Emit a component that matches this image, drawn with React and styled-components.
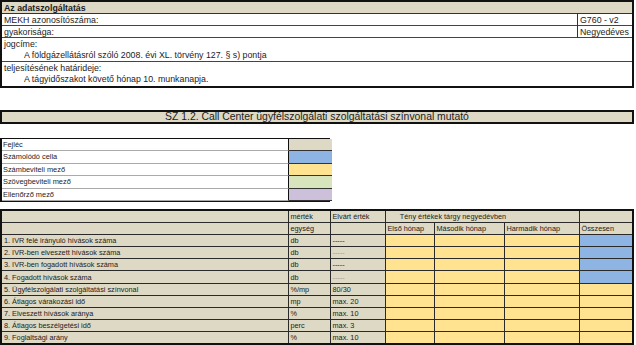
import React from "react";
import styled, { createGlobalStyle } from "styled-components";

const GlobalStyle = createGlobalStyle`
body {
  margin: 0;
  background: #ffffff;
  font-family: "Liberation Sans", Arial, sans-serif;
  color: #1c1c1c;
}
`

const beige = "#ddd9c4";
const blue = "#8db4e2";
const yellow = "#ffe391";
const green = "#d8e4bc";
const purple = "#ccc0da";

const Page = styled.div`
display: flex;
flex-direction: column;
width: 636px;
height: 345px;
overflow: hidden;
`

const InfoBox = styled.section`
width: 634px;
box-sizing: border-box;
border: 2px solid #111;
font-size: 8.8px;
`

const InfoHeader = styled.div`
height: 12px;
box-sizing: border-box;
background: ${beige};
font-weight: bold;
padding: 1px 2px 0;
border-bottom: 1px solid #333;
line-height: 11px;
`

const InfoRow = styled.div`
display: grid;
grid-template-columns: 1fr 55px;
height: ${p => p.$tall ? 24 : 12}px;
box-sizing: border-box;
border-bottom: ${p => p.$last ? "none" : "1px solid #444"};
line-height: 11px;
`

const InfoCell = styled.div`
padding: 1px 2px 0;
border-left: ${p => p.$side ? "1px solid #333" : "none"};
`

const Indent = styled.div`
padding-left: 20px;
`

const TitleBar = styled.div`
margin-top: 22px;
width: 634px;
height: 14px;
box-sizing: border-box;
border: 2px solid #111;
background: ${beige};
font-size: 10.4px;
text-align: center;
line-height: 10px;
`

const Legend = styled.div`
margin-top: 14px;
width: 330px;
display: grid;
grid-template-columns: 287px 43px;
border: 1px solid #111;
border-left-width: 2px;
box-sizing: border-box;
`

const LegendLabel = styled.div`
height: 12.4px;
box-sizing: border-box;
font-size: 7.4px;
line-height: 11px;
padding-left: 1px;
background: #fff;
border-bottom: 1px solid #aaa;
border-right: 1px solid #111;
`

const Swatch = styled.div`
height: 12.4px;
box-sizing: border-box;
background: ${p => p.$color};
border-bottom: 1px solid #333;
`

const Table = styled.table`
margin-top: 7px;
width: 632px;
table-layout: fixed;
border-collapse: collapse;
border: 2px solid #111;
font-size: 7.3px;
`

const Row = styled.tr`
height: 12.2px;
`

const Cell = styled.td`
padding: 0 2px;
line-height: 10px;
vertical-align: bottom;
white-space: nowrap;
overflow: hidden;
border: 1px solid #2a2a2a;
background: ${p => p.$bg || beige};
color: ${p => p.$faint ? "#9a9a9a" : "#1c1c1c"};
text-align: ${p => p.$center ? "center" : "left"};
`

const indicators = [
  { name: "1. IVR felé irányuló hívások száma", unit: "db", expected: "-----", total: blue },
  { name: "2. IVR-ben elveszett hívások száma", unit: "db", expected: "-----", faint: true, total: blue },
  { name: "3. IVR-ben fogadott hívások száma", unit: "db", expected: "-----", total: blue },
  { name: "4. Fogadott hívások száma", unit: "db", expected: "-----", faint: true, total: blue },
  { name: "5. Ügyfélszolgálati szolgáltatási színvonal", unit: "%/mp", expected: "80/30", total: yellow },
  { name: "6. Átlagos várakozási idő", unit: "mp", expected: "max. 20", total: yellow },
  { name: "7. Elveszett hívások aránya", unit: "%", expected: "max. 10", total: yellow },
  { name: "8. Átlagos beszélgetési idő", unit: "perc", expected: "max. 3", total: yellow },
  { name: "9. Foglaltsági arány", unit: "%", expected: "max. 10", total: yellow },
];

const legend = [
  ["Fejléc", beige],
  ["Számolódó cella", blue],
  ["Számbeviteli mező", yellow],
  ["Szövegbeviteli mező", green],
  ["Ellenőrző mező", purple],
];

function App() {
  return (
    <Page>
      <GlobalStyle />
      <InfoBox>
        <InfoHeader>Az adatszolgáltatás</InfoHeader>
        <InfoRow>
          <InfoCell>MEKH azonosítószáma:</InfoCell>
          <InfoCell $side>G760 - v2</InfoCell>
        </InfoRow>
        <InfoRow>
          <InfoCell>gyakorisága:</InfoCell>
          <InfoCell $side>Negyedéves</InfoCell>
        </InfoRow>
        <InfoRow $tall>
          <InfoCell>
            jogcíme:
            <Indent>A földgázellátásról szóló 2008. évi XL. törvény 127. § s) pontja</Indent>
          </InfoCell>
          <InfoCell />
        </InfoRow>
        <InfoRow $tall $last>
          <InfoCell>
            teljesítésének határideje:
            <Indent>A tágyidőszakot követő hónap 10. munkanapja.</Indent>
          </InfoCell>
          <InfoCell />
        </InfoRow>
      </InfoBox>

      <TitleBar>SZ 1.2. Call Center ügyfélszolgálati szolgáltatási színvonal mutató</TitleBar>

      <Legend>
        {legend.map(([label, color]) => (
          <React.Fragment key={label}>
            <LegendLabel>{label}</LegendLabel>
            <Swatch $color={color} />
          </React.Fragment>
        ))}
      </Legend>

      <Table>
        <colgroup>
          <col style={{ width: 287 }} />
          <col style={{ width: 42 }} />
          <col style={{ width: 55 }} />
          <col style={{ width: 49 }} />
          <col style={{ width: 70 }} />
          <col style={{ width: 75 }} />
          <col style={{ width: 54 }} />
        </colgroup>
        <tbody>
          <Row>
            <Cell />
            <Cell>mérték</Cell>
            <Cell>Elvárt érték</Cell>
            <Cell colSpan={3} $center style={{ paddingRight: 60 }}>Tény értékek tárgy negyedévben</Cell>
            <Cell />
          </Row>
          <Row>
            <Cell />
            <Cell>egység</Cell>
            <Cell />
            <Cell>Első hónap</Cell>
            <Cell>Második hónap</Cell>
            <Cell>Harmadik hónap</Cell>
            <Cell>Összesen</Cell>
          </Row>
          {indicators.map(item => (
            <Row key={item.name}>
              <Cell>{item.name}</Cell>
              <Cell>{item.unit}</Cell>
              <Cell $faint={item.faint}>{item.expected}</Cell>
              <Cell $bg={yellow} />
              <Cell $bg={yellow} />
              <Cell $bg={yellow} />
              <Cell $bg={item.total} />
            </Row>
          ))}
        </tbody>
      </Table>
    </Page>
  );
}

export default App;
